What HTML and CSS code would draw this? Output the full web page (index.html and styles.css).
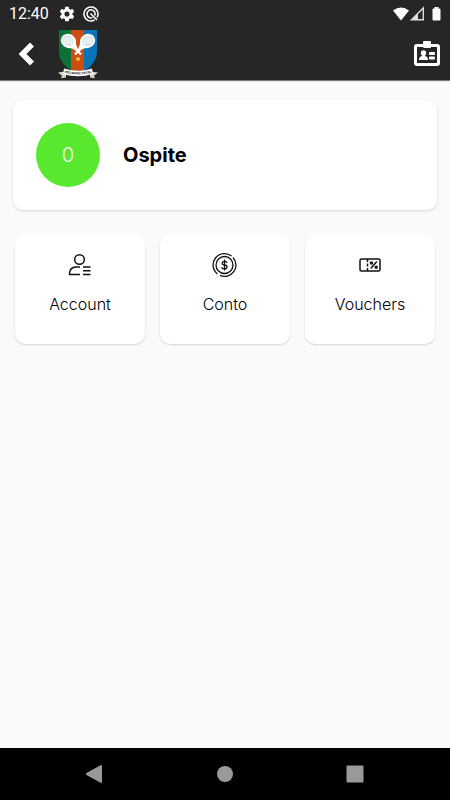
FILE: index.html
```html
<!DOCTYPE html>
<html lang="it">
<head>
    <meta charset="UTF-8">
    <meta name="viewport" content="width=device-width, initial-scale=1.0">
    <title>Ospite</title>
    <link rel="stylesheet" href="styles.css">
</head>
<body>
    <div class="status-bar">
        <span class="clock">12:40</span>
        <svg class="gear" width="16" height="16" viewBox="1 1 22 22"><path fill="#fff" d="M19.4 13c0-.3.1-.6.1-1s0-.7-.1-1l2.2-1.700c.2-.2.2-.4.1-.6l-2-3.500c-.1-.2-.4-.3-.6-.2l-2.500 1c-.5-.4-1.100-.7-1.700-1l-.4-2.600c0-.2-.2-.4-.5-.4h-4c-.3 0-.5.2-.5.4L9.100 5c-.6.3-1.200.6-1.700 1l-2.500-1c-.2-.1-.5 0-.6.2l-2 3.500c-.1.2-.1.5.1.6L4.600 11c0 .3-.1.6-.1 1s0 .7.1 1l-2.200 1.700c-.2.2-.2.4-.1.6l2 3.500c.1.2.4.3.6.2l2.500-1c.5.4 1.100.7 1.700 1l.4 2.600c0 .2.2.4.5.4h4c.3 0 .5-.2.5-.4l.4-2.600c.6-.3 1.200-.6 1.700-1l2.500 1c.2.1.5 0 .6-.2l2-3.500c.1-.2.1-.5-.1-.6zM12 15.500a3.500 3.500 0 1 1 0-7 3.500 3.500 0 0 1 0 7z"/></svg>
        <svg class="sync" width="16" height="16" viewBox="0 0 16 16" fill="none" stroke="#fff" stroke-width="1.500">
            <path d="M11.500 14A7 7 0 1 1 14 11.500"/>
            <path d="M9.500 11.600A4 4 0 1 1 11.700 9.500"/>
            <path d="M7.500 7.500l6.500 6.500" stroke-width="1.600"/>
        </svg>
        <svg class="signals" width="50" height="16" viewBox="0 0 50 16">
            <path fill="#fff" d="M1 4.500Q9 -1.500 17 4.500L9 14.500z"/>
            <path fill="none" stroke="#ddd" stroke-width="1.400" d="M31.300 2V13.800H19.500z"/>
            <path fill="#ddd" d="M26 7.300V14h-6.700z"/>
            <path fill="#fff" d="M42.500 1h4v1.500h1q1 0 1 1V13.500q0 1-1 1h-6q-1 0-1-1V3.500q0-1 1-1h1z"/>
        </svg>
    </div>

    <header class="app-bar">
        <button class="icon-button" aria-label="Indietro">
            <svg width="18" height="24" viewBox="0 0 18 24" fill="none" stroke="#fff" stroke-width="5.500"><path d="M14 2.500L4.500 12l9.500 9.500"/></svg>
        </button>
        <svg class="logo" width="42" height="50" viewBox="0 0 42 50" role="img" aria-label="Magic Padel">
            <clipPath id="shield"><path d="M2 1H40V22Q40 37 21 45Q2 37 2 22z"/></clipPath>
            <g clip-path="url(#shield)">
                <path fill="#0b7137" d="M2 0h12v46H2z"/>
                <path fill="#cc4e12" d="M14 0h13v46H14z"/>
                <path fill="#0874b8" d="M27 0h14v46H27z"/>
            </g>
            <path d="M16 17l8 8.500M26 17l-8 8.500" stroke="#fff" stroke-width="2.200"/>
            <g fill="#fff">
                <ellipse cx="11.500" cy="12" rx="7.800" ry="7" transform="rotate(30 11.500 12)"/>
                <ellipse cx="30.500" cy="12" rx="7.800" ry="7" transform="rotate(-30 30.500 12)"/>
                <path d="M18 11.500l1.500 5 1.500 4-1.500 1.500q-3.500-3-8-3.500zM24 11.500l-1.500 5-1.500 4 1.500 1.500q3.500-3 8-3.500z"/>
            </g>
            <g fill="#d3e2e4">
                <ellipse cx="11" cy="11.800" rx="6" ry="5.200" transform="rotate(30 11 11.800)"/>
                <ellipse cx="31" cy="11.800" rx="6" ry="5.200" transform="rotate(-30 31 11.800)"/>
            </g>
            <path d="M6 10h10M5 12h12M6 14h10M8 7v9M11 7v10M14 8v8M26 10h10M25 12h12M26 14h10M28 8v8M31 7v10M34 7v9" stroke="#fff" stroke-width=".6"/>
            <circle cx="21" cy="30" r="2" fill="#e9bf35"/>
            <path fill="#ddd9c9" d="M1 43.500l8-1v6l-5 .8 1-2.500zM41 43.500l-8-1v6l5 .8-1-2.500z"/>
            <path fill="#fff" d="M7 39.500Q21 44 35 39.500L36 45Q21 49.500 6 45z"/>
            <path id="ribbon" fill="none" d="M8 43.800Q21 47 34 43.800"/>
            <text class="logo-text"><textPath href="#ribbon" startOffset="50%">SSD MAGIC PADEL</textPath></text>
        </svg>
        <button class="icon-button badge-button" aria-label="Tessera">
            <svg width="28" height="26" viewBox="0 0 28 26">
                <rect x="2.500" y="4.500" width="23" height="19" rx="1.500" fill="none" stroke="#fff" stroke-width="3"/>
                <rect x="10" y="0" width="8" height="7" rx="1" fill="#fff"/>
                <circle cx="10.500" cy="12" r="2.700" fill="#fff"/>
                <path fill="#fff" d="M9 13h3v2q3 .5 3 4H6q0-3.500 3-4z"/>
                <rect x="16" y="11" width="6" height="3" rx="1" fill="#fff"/>
                <rect x="16" y="15.500" width="6" height="3" rx="1" fill="#fff"/>
            </svg>
        </button>
    </header>

    <main class="content">
        <section class="card profile">
            <div class="avatar">0</div>
            <h1 class="name">Ospite</h1>
        </section>
        <nav class="tiles">
            <a class="card tile" href="#account">
                <svg width="24" height="26" viewBox="0 0 24 26" fill="none" stroke="#111" stroke-width="1.500">
                    <circle cx="11.500" cy="7.500" r="4.800"/>
                    <path d="M12 15H8Q1.500 15 1.500 22.500H12M15 15h7.500M15 18.800h7.500M15 22.500h7.500"/>
                </svg>
                <span>Account</span>
            </a>
            <a class="card tile" href="#conto">
                <svg width="26" height="26" viewBox="0 0 26 26" fill="none" stroke="#111" stroke-width="1.300">
                    <circle cx="12.500" cy="13" r="8.500"/>
                    <path d="M5.500 22A11.300 11.300 0 1 1 19.500 4M21 5.500A11.300 11.300 0 0 1 8 23.400"/>
                    <path d="M15 10.800Q14.700 9.300 12.500 9.300t-2.300 1.900 2.300 1.800 2.500 1.900-2.500 1.900-2.600-1.600M12.500 7.500v11"/>
                </svg>
                <span>Conto</span>
            </a>
            <a class="card tile" href="#vouchers">
                <svg width="24" height="26" viewBox="0 0 24 26" fill="none" stroke="#111" stroke-width="1.500">
                    <rect x="2" y="7" width="20" height="12" rx="1.500"/>
                    <path d="M9.500 7v12" stroke-dasharray="3 1.500"/>
                    <path d="M18.800 9.500l-6 7"/>
                    <circle cx="13.500" cy="11" r="1"/>
                    <circle cx="18.200" cy="15.300" r="1"/>
                </svg>
                <span>Vouchers</span>
            </a>
        </nav>
    </main>

    <div class="system-nav">
        <button aria-label="Back"><svg width="18" height="18" viewBox="0 0 18 18"><path fill="#999" d="M15 0q1 0 1 1v16q0 1-1 1L.5 10q-1-1 0-2z"/></svg></button>
        <button aria-label="Home"><svg width="18" height="18" viewBox="0 0 18 18"><circle cx="9" cy="9" r="8" fill="#999"/></svg></button>
        <button aria-label="Recents"><svg width="18" height="18" viewBox="0 0 18 18"><rect x=".5" y=".5" width="17" height="17" rx="1" fill="#999"/></svg></button>
    </div>
</body>
</html>
```

FILE: styles.css
```css
* {
    box-sizing: border-box;
}
body {
    margin: 0;
    min-height: 100vh;
    display: flex;
    flex-direction: column;
    background-color: #fafafa;
    font-family: Inter, "Liberation Sans", sans-serif;
    color: #000;
}
button {
    padding: 0;
    border: none;
    background: none;
    cursor: pointer;
}
svg {
    display: block;
}
.status-bar {
    display: flex;
    align-items: center;
    height: 27px;
    padding: 0 8px 0 9px;
    background-color: #262626;
}
.clock {
    font-family: Roboto, sans-serif;
    font-size: 16px;
    color: #fff;
}
.gear {
    margin-left: 10px;
}
.sync {
    margin-left: 8px;
}
.signals {
    margin-left: auto;
}
.app-bar {
    display: flex;
    align-items: center;
    height: 53px;
    padding: 0 9px 0 18px;
    background-color: #262626;
    box-shadow: 0 1px 1px rgba(0, 0, 0, 0.5);
}
.logo {
    margin-left: 21px;
}
.logo-text {
    font-size: 3px;
    font-weight: 700;
    text-anchor: middle;
    fill: #222;
}
.badge-button {
    margin-left: auto;
}
.content {
    flex: 1;
    padding: 20px 13px;
}
.card {
    background-color: #fff;
    border-radius: 10px;
    box-shadow: 0 1px 3px rgba(0, 0, 0, 0.15);
}
.profile {
    display: flex;
    align-items: center;
    gap: 23px;
    padding: 23px;
}
.avatar {
    display: flex;
    align-items: center;
    justify-content: center;
    width: 64px;
    height: 64px;
    border-radius: 50%;
    background-color: #58e92f;
    color: #fff;
    font-size: 20px;
    font-weight: 300;
}
.name {
    margin: 0;
    font-size: 20px;
    font-weight: 700;
}
.tiles {
    display: grid;
    grid-template-columns: repeat(3, 1fr);
    gap: 15px;
    margin-top: 25px;
    padding: 0 2px;
}
.tile {
    display: flex;
    flex-direction: column;
    align-items: center;
    gap: 16px;
    padding: 17px 0 30px;
    color: #000;
    font-size: 16px;
    font-weight: 300;
    line-height: 20px;
    text-decoration: none;
    box-shadow: 0 1px 2px rgba(0, 0, 0, 0.15);
}
.system-nav {
    display: flex;
    justify-content: space-between;
    align-items: center;
    height: 52px;
    padding: 0 86px;
    background-color: #000;
}
```
